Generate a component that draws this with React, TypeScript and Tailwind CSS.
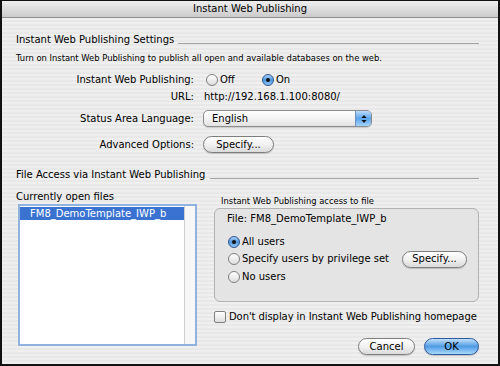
import React from "react";

function Radio({ checked }: { checked?: boolean }) {
  return checked ? (
    <span className="w-[12px] h-[12px] shrink-0 rounded-full border border-[#2f5690] bg-linear-to-b from-[#a9d0f5] via-[#4f95de] to-[#8fc6f5] flex items-center justify-center">
      <span className="w-[4px] h-[4px] rounded-full bg-[#111]" />
    </span>
  ) : (
    <span className="w-[12px] h-[12px] shrink-0 rounded-full border border-[#7f7f7f] bg-linear-to-b from-[#ffffff] to-[#dedede]" />
  );
}

function Btn({ label, w, primary }: { label: string; w: string; primary?: boolean }) {
  return (
    <div
      className={
        "h-[17px] rounded-full flex items-center justify-center shrink-0 shadow-[0_1px_1px_rgba(0,0,0,0.18)] " +
        w +
        (primary
          ? " border border-[#2b5a9e] bg-linear-to-b from-[#c0e0fb] via-[#4f9be4] to-[#a8dafc]"
          : " border border-[#7e7e7e] bg-linear-to-b from-[#ffffff] via-[#f1f1f1] to-[#dadada]")
      }
    >
      {label}
    </div>
  );
}

const stripes =
  "bg-[image:repeating-linear-gradient(180deg,#efefef_0px,#efefef_2px,#e8e8e8_2px,#e8e8e8_4px)]";

export default function App() {
  return (
    <div className="w-[500px] h-[366px] flex flex-col border-x-2 border-b-2 border-t border-[#111] bg-[#ececec] font-['DejaVu_Sans',sans-serif] text-[10px] leading-none text-black overflow-hidden whitespace-nowrap">
      <div className="h-[17px] shrink-0 flex items-center justify-center bg-linear-to-b from-[#efefef] to-[#cbcbcb] border-b border-[#8e8e8e]">
        Instant Web Publishing
      </div>
      <div className={"flex-1 flex flex-col pl-[14px] pr-[19px] " + stripes}>
        {/* Heading 1 */}
        <div className="mt-[14px] h-[16px] flex items-center">
          <span>Instant Web Publishing Settings</span>
          <div className="flex-1 ml-[4px] mt-[6px] border-t border-[#a3a3a3]" />
        </div>
        <div className="mt-[3px] h-[14px] flex items-center text-[8.4px]">
          Turn on Instant Web Publishing to publish all open and available databases on the web.
        </div>
        {/* IWP */}
        <div className="mt-[7px] h-[16px] flex items-center">
          <span className="w-[178px] text-right">Instant Web Publishing:</span>
          <div className="ml-[12px] w-[56px] flex items-center gap-[2px]">
            <Radio />
            <span>Off</span>
          </div>
          <div className="flex items-center gap-[2px]">
            <Radio checked />
            <span>On</span>
          </div>
        </div>
        {/* URL */}
        <div className="mt-[1px] h-[16px] flex items-center">
          <span className="w-[178px] text-right">URL:</span>
          <span className="ml-[10px]">http://192.168.1.100:8080/</span>
        </div>
        {/* Language */}
        <div className="mt-[5px] h-[17px] flex items-center">
          <span className="w-[178px] text-right">Status Area Language:</span>
          <div className="ml-[9px] w-[169px] h-[17px] flex rounded-[5px] border border-[#8c8c8c] bg-linear-to-b from-[#ffffff] via-[#f4f4f4] to-[#e2e2e2] overflow-hidden shadow-[0_1px_1px_rgba(0,0,0,0.15)]">
            <span className="flex-1 flex items-center pl-[8px]">English</span>
            <div className="w-[16px] h-full border-l border-[#6d8fbf] bg-linear-to-b from-[#b9dcfa] via-[#5ba3ea] to-[#a3d4fb] flex items-center justify-center">
              <svg width="6" height="10" viewBox="0 0 6 10">
                <path d="M3 1 L5.5 4 L0.5 4 Z" fill="#111" />
                <path d="M3 9 L5.5 6 L0.5 6 Z" fill="#111" />
              </svg>
            </div>
          </div>
        </div>
        {/* Advanced */}
        <div className="mt-[9px] h-[17px] flex items-center">
          <span className="w-[178px] text-right">Advanced Options:</span>
          <div className="ml-[9px]">
            <Btn label="Specify..." w="w-[71px]" />
          </div>
        </div>
        {/* Heading 2 */}
        <div className="mt-[14px] h-[16px] flex items-center">
          <span>File Access via Instant Web Publishing</span>
          <div className="flex-1 ml-[5px] mt-[6px] border-t border-[#a3a3a3]" />
        </div>
        {/* Two columns */}
        <div className="mt-[6px] flex">
          <div className="w-[183px] flex flex-col">
            <div className="mt-[1px] h-[14px] flex items-center">Currently open files</div>
            <div className="ml-[2px] w-[179px] h-[142px] border-2 border-[#8fb3de] bg-white flex">
              <div className="flex-1 pt-[1px]">
                <div className="h-[13px] bg-[#3a72d2] text-white flex items-center pl-[10px]">
                  FM8_DemoTemplate_IWP_b
                </div>
              </div>
              <div className="w-[11px] border-l border-[#cfcfcf] bg-[#f7f7f7]" />
            </div>
          </div>
          <div className="flex-1 ml-[15px] flex flex-col">
            <div className="mt-[6px] h-[12px] flex items-center pl-[7px] text-[8.4px]">
              Instant Web Publishing access to file
            </div>
            <div className="mt-[1px] h-[94px] rounded-[6px] border border-[#b2b2b2] bg-[#e4e4e4] pl-[12px] pr-[11px] pt-[4px] flex flex-col">
              <div className="h-[12px] flex items-center">File: FM8_DemoTemplate_IWP_b</div>
              <div className="mt-[8px] h-[17px] flex items-center gap-[2px] ml-[1px]">
                <Radio checked />
                <span>All users</span>
              </div>
              <div className="h-[18px] flex items-center gap-[2px] ml-[1px]">
                <Radio />
                <span>Specify users by privilege set</span>
                <div className="ml-auto">
                  <Btn label="Specify..." w="w-[65px]" />
                </div>
              </div>
              <div className="h-[17px] flex items-center gap-[2px] ml-[1px]">
                <Radio />
                <span>No users</span>
              </div>
            </div>
            <div className="mt-[9px] h-[12px] flex items-center">
              <span className="w-[12px] h-[12px] shrink-0 rounded-[2px] border border-[#7f7f7f] bg-linear-to-b from-[#ffffff] to-[#dedede]" />
              <span className="ml-[3px] tracking-[-0.08px]">Don't display in Instant Web Publishing homepage</span>
            </div>
            <div className="mt-[15px] flex justify-end gap-[9px]">
              <Btn label="Cancel" w="w-[57px]" />
              <Btn label="OK" w="w-[55px]" primary />
            </div>
          </div>
        </div>
      </div>
    </div>
  );
}
